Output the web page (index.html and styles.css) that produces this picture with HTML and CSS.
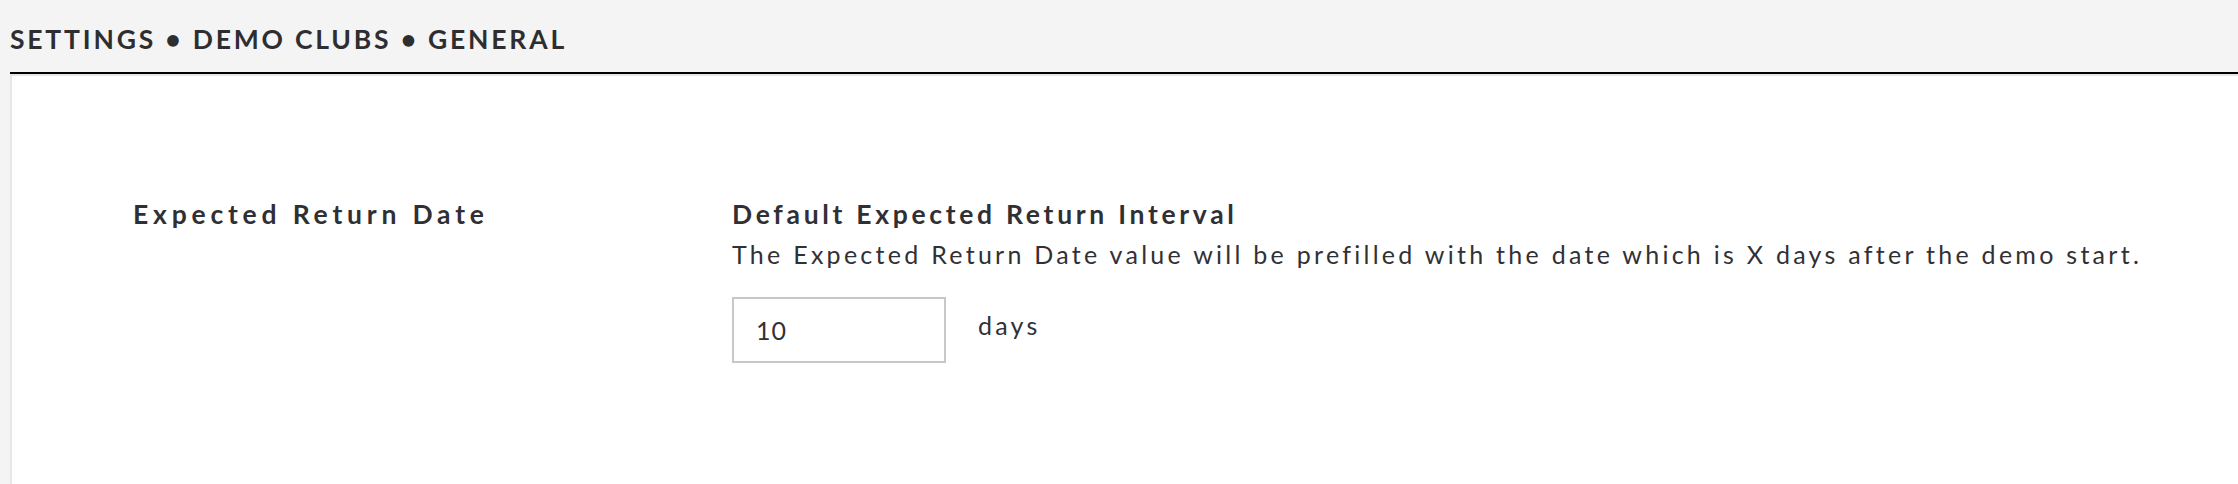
FILE: index.html
```html
<!DOCTYPE html>
<html lang="en">
<head>
<meta charset="utf-8">
<title>Settings • Demo Clubs • General</title>
<link rel="stylesheet" href="styles.css">
</head>
<body>
<div class="page">
  <header class="topbar">
    <h1 class="crumbs">Settings • Demo Clubs • General</h1>
  </header>
  <main class="panel">
    <section class="setting">
      <h2 class="setting-label">Expected Return Date</h2>
      <div class="setting-body">
        <h3 class="field-title">Default Expected Return Interval</h3>
        <p class="field-desc">The Expected Return Date value will be prefilled with the date which is X days after the demo start.</p>
        <div class="field-row">
          <input class="num-input" type="text" value="10">
          <span class="unit">days</span>
        </div>
      </div>
    </section>
  </main>
</div>
</body>
</html>
```
FILE: styles.css
```css
html, body {
  margin: 0;
  padding: 0;
  height: 100%;
}
body {
  background: #f4f4f4;
  font-family: Lato, "Liberation Sans", sans-serif;
  color: #313135;
  overflow: hidden;
}
.page {
  display: flex;
  flex-direction: column;
  height: 100%;
  padding-left: 10px;
  box-sizing: border-box;
}
.topbar {
  height: 74px;
  border-bottom: 2px solid #000;
  display: flex;
  align-items: center;
  padding-top: 6px;
  box-sizing: border-box;
}
.crumbs {
  margin: 0;
  font-size: 26.5px;
  font-weight: 700;
  letter-spacing: 2.8px;
  text-transform: uppercase;
  line-height: 32px;
  color: #2e2e30;
}
.panel {
  flex: 1;
  background: #fff;
  border-left: 2px solid #e6e6e6;
  border-top: 2px solid #e6e6e6;
}
.setting {
  display: grid;
  grid-template-columns: 599px 1fr;
  padding: 122px 0 0 121px;
}
.setting-label,
.field-title {
  margin: 0;
  font-size: 26.5px;
  font-weight: 700;
  line-height: 32px;
  color: #303034;
}
.setting-label {
  letter-spacing: 4.8px;
}
.field-title {
  letter-spacing: 3.7px;
}
.field-desc {
  margin: 8px 0 0;
  font-size: 25px;
  line-height: 32px;
  letter-spacing: 3.27px;
}
.field-row {
  display: flex;
  align-items: flex-start;
  gap: 32px;
  margin-top: 27px;
}
.num-input {
  width: 214px;
  height: 66px;
  box-sizing: border-box;
  border: 2px solid #c8c8c8;
  padding: 0 0 0 22px;
  font-family: inherit;
  font-size: 25px;
  letter-spacing: 1px;
  color: #313135;
  background: #fff;
  outline: none;
}
.unit {
  font-size: 25px;
  line-height: 32px;
  letter-spacing: 3.2px;
  padding-top: 12px;
}
```
